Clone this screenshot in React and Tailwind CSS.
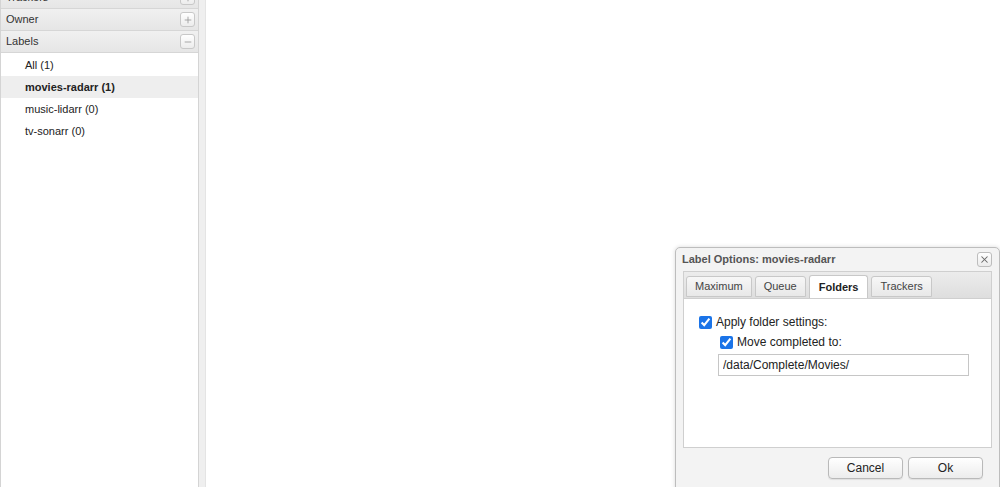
import { Plus, Minus, X } from 'lucide-react'

const labels = [
  { name: 'All', count: 1 },
  { name: 'movies-radarr', count: 1, active: true },
  { name: 'music-lidarr', count: 0 },
  { name: 'tv-sonarr', count: 0 },
]

function PanelHeader({ title, open }) {
  return (
    <div className="flex h-[22px] items-center justify-between border-b border-[#d6d6d6] bg-gradient-to-b from-[#f0f0f0] to-[#e6e6e6] pl-[5px] pr-[3px] text-[11px] text-[#333]">
      <span>{title}</span>
      <span className="flex h-[15px] w-[15px] items-center justify-center rounded-[3px] border border-[#c8c8c8] bg-gradient-to-b from-white to-[#ececec] text-[#999]">
        {open ? <Minus size={10} strokeWidth={2} /> : <Plus size={10} strokeWidth={2} />}
      </span>
    </div>
  )
}

function Tab({ children, active }) {
  return (
    <div
      className={
        active
          ? 'flex h-[23px] items-center rounded-t-[3px] border border-b-0 border-[#c8c8c8] bg-white px-[9px] text-[11px] font-bold text-[#222]'
          : 'mb-[1px] flex h-[21px] items-center rounded-t-[3px] border border-[#c8c8c8] bg-gradient-to-b from-[#f7f7f7] to-[#e8e8e8] px-[8px] text-[11px] text-[#444]'
      }
    >
      {children}
    </div>
  )
}

function Button({ children }) {
  return (
    <button className="h-[22px] w-[75px] rounded-[4px] border border-[#b9b9b9] bg-gradient-to-b from-white to-[#ececec] text-[12px] text-[#222] shadow-[0_1px_1px_rgba(0,0,0,0.08)]">
      {children}
    </button>
  )
}

export default function App() {
  return (
    <div className="relative flex h-[487px] w-[1000px] overflow-hidden bg-white font-['Liberation_Sans',Arial,sans-serif]">
      {/* sidebar */}
      <div className="flex w-[206px] shrink-0">
        <div className="flex w-[199px] flex-col border-l border-r border-[#d4d4d4] bg-white">
          <div className="-mt-[13px]">
            <PanelHeader title="Trackers" />
          </div>
          <PanelHeader title="Owner" />
          <PanelHeader title="Labels" open />
          <div className="flex flex-col pt-[1px]">
            {labels.map((l) => (
              <div
                key={l.name}
                className={
                  'flex h-[22px] items-center pl-[24px] text-[11px] text-[#222] ' +
                  (l.active ? 'bg-[#eeeeee] font-bold' : '')
                }
              >
                {l.name} ({l.count})
              </div>
            ))}
          </div>
        </div>
        <div className="w-[7px] border-r border-[#e4e4e4] bg-[#efefef]" />
      </div>

      {/* main area */}
      <div className="flex-1 bg-white" />

      {/* label options dialog */}
      <div className="absolute left-[675px] top-[247px] flex h-[250px] w-[325px] flex-col rounded-[5px] border border-[#bdbdbd] bg-[#f3f3f3] px-[7px] shadow-[0_0_4px_rgba(0,0,0,0.15)]">
        <div className="flex h-[23px] items-center justify-between pr-[0px]">
          <span className="-ml-[1px] text-[11px] font-bold text-[#555]">Label Options: movies-radarr</span>
          <span className="flex h-[15px] w-[15px] items-center justify-center rounded-[3px] border border-[#bdbdbd] bg-gradient-to-b from-white to-[#ebebeb] text-[#666]">
            <X size={11} strokeWidth={2.25} />
          </span>
        </div>
        <div className="flex h-[27px] items-end gap-[3px] border border-b-0 border-[#cfcfcf] bg-gradient-to-b from-[#ececec] to-[#dedede] pl-[2px]">
          <Tab>Maximum</Tab>
          <Tab>Queue</Tab>
          <Tab active>Folders</Tab>
          <Tab>Trackers</Tab>
        </div>
        <div className="flex h-[150px] flex-col border border-[#cfcfcf] bg-white pl-[15px] pt-[14px] text-[12px] text-[#222]">
          <label className="flex h-[18px] items-center gap-[4px]">
            <input type="checkbox" defaultChecked className="m-0 h-[13px] w-[13px] accent-[#1b74e8]" />
            <span>Apply folder settings:</span>
          </label>
          <div className="mt-[2px] pl-[21px]">
            <label className="flex h-[18px] items-center gap-[4px]">
              <input type="checkbox" defaultChecked className="m-0 h-[13px] w-[13px] accent-[#1b74e8]" />
              <span>Move completed to:</span>
            </label>
            <input
              type="text"
              defaultValue="/data/Complete/Movies/"
              className="mt-[3px] ml-[-2px] h-[22px] w-[251px] border border-[#c6c6c6] bg-white px-[4px] text-[12px] text-[#222] outline-none"
            />
          </div>
        </div>
        <div className="flex justify-end gap-[5px] pr-[9px] pt-[9px]">
          <Button>Cancel</Button>
          <Button>Ok</Button>
        </div>
      </div>
    </div>
  )
}
